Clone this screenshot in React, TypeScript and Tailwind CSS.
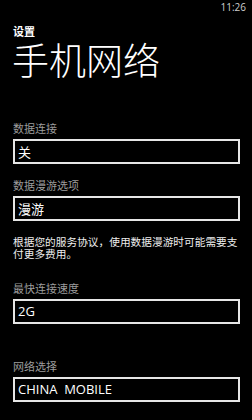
function Field({ label, value, labelMt, latin }: { label: string; value: string; labelMt: string; latin?: boolean }) {
  return (
    <div>
      <div className={`${labelMt} text-[11px] leading-[14px] text-[#9c9c9c]`}>{label}</div>
      <div className="mt-[4px] h-[25px] w-[227px] border-2 border-[#e6e6e6] flex items-center pl-[3px] text-[13px] text-white">
        <span
          className={
            latin
              ? "whitespace-pre leading-none font-[family-name:'Open_Sans','Noto_Sans',sans-serif]"
              : "whitespace-pre leading-none"
          }
        >
          {value}
        </span>
      </div>
    </div>
  );
}

export default function App() {
  return (
    <div className="w-[252px] h-[420px] bg-black text-white overflow-hidden font-[family-name:'Noto_Sans_CJK_SC','Noto_Sans',sans-serif]">
      <div className="h-[20px] flex justify-end pr-[6px] pt-[1px] text-[10px] leading-[12px] text-[#cfcfcf] font-[family-name:'Open_Sans',sans-serif]">
        11:26
      </div>
      <div className="px-[13px]">
        <div className="font-[family-name:'Liberation_Sans','Noto_Sans_CJK_SC',sans-serif]">
          <div className="mt-[5px] text-[11px] leading-[14px] font-bold">设置</div>
          <div className="mt-[6px] text-[37px] leading-[36px] font-light -ml-[1px]">手机网络</div>
        </div>

        <Field label="数据连接" value="关" labelMt="mt-[40px]" />
        <Field label="数据漫游选项" value="漫游" labelMt="mt-[14px]" />

        <p className="mt-[15px] w-[227px] text-[10.7px] leading-[12px] text-[#eeeeee]">
          根据您的服务协议，使用数据漫游时可能需要支付更多费用。
        </p>

        <Field label="最快连接速度" value="2G" labelMt="mt-[21px]" latin />
        <Field label="网络选择" value="CHINA  MOBILE" labelMt="mt-[35px]" latin />
      </div>
    </div>
  );
}
